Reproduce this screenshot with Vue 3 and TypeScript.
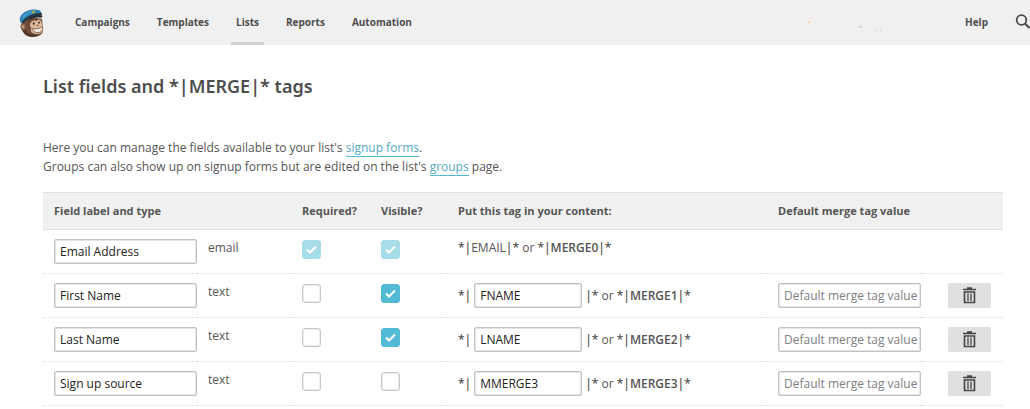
<script setup lang="ts">
import { ref } from 'vue'

interface ListField {
  id: number
  label: string
  type: string
  required: boolean
  visible: boolean
  locked: boolean
  tag: string
  alias: string
  fallback: string
}

const navItems = ['Campaigns', 'Templates', 'Lists', 'Reports', 'Automation']
const current = 'Lists'

const fields = ref<ListField[]>([
  { id: 0, label: 'Email Address', type: 'email', required: true, visible: true, locked: true, tag: 'EMAIL', alias: 'MERGE0', fallback: '' },
  { id: 1, label: 'First Name', type: 'text', required: false, visible: true, locked: false, tag: 'FNAME', alias: 'MERGE1', fallback: '' },
  { id: 2, label: 'Last Name', type: 'text', required: false, visible: true, locked: false, tag: 'LNAME', alias: 'MERGE2', fallback: '' },
  { id: 3, label: 'Sign up source', type: 'text', required: false, visible: false, locked: false, tag: 'MMERGE3', alias: 'MERGE3', fallback: '' },
])

function removeField(id: number) {
  fields.value = fields.value.filter((f) => f.id !== id)
}
</script>

<template>
  <div class="page">
    <header class="topbar">
      <a href="#" class="logo" aria-label="Home">
        <svg width="28" height="30" viewBox="0 0 28 30" aria-hidden="true">
          <path d="M4 14C2 17 3 22 5 24C7 28 13 30 18 28.500C22 28 25 26 25 22L24 11L14 9Z" fill="#6f4c39" />
          <path d="M5 23C8 29 16 30 21 27C16 27 9 27 7 22Z" fill="#4a3025" />
          <ellipse cx="5" cy="18.500" rx="2.500" ry="3" fill="#8f6850" />
          <ellipse cx="5.200" cy="18.600" rx="1.200" ry="1.600" fill="#c39878" />
          <path d="M12.500 15C14 12 17 12 18.500 13C20 11 23.500 11 23.500 15L25 19C26 23 24 26 19 26C14 26 11.500 23 13.500 20C12 19 11.500 17 12.500 15Z" fill="#dcb99a" />
          <path d="M14.500 20.500C18 21.500 22 20.500 24.500 18.500C25.500 22 23 24.800 19.500 24.500C16.500 24.500 14.500 23 14.500 20.500Z" fill="#fffaf0" stroke="#6b4535" stroke-width=".8" />
          <path d="M17 21.500V24M20 21.500V24.500M22.500 20.500V23.500" stroke="#c0a893" stroke-width=".5" />
          <ellipse cx="15.800" cy="15.600" rx=".9" ry="1.300" fill="#3a2920" />
          <ellipse cx="21" cy="14.600" rx=".8" ry="1.200" fill="#3a2920" />
          <path d="M18.500 17.500L20.500 17.200" stroke="#704a38" stroke-width="1" />
          <path d="M2 13C1 9 4 5 9 3C13 1 18 1 22 2.500L24 6C16 6 9 9 5 15C3 15 2 14.500 2 13Z" fill="#2a80b2" />
          <path d="M4 9C8 4 13 2.500 18 2.500C13 5 8 7 5 11Z" fill="#429bca" />
          <path d="M4 14C8 8 16 4.500 23.500 5L24 7.500C17 7.500 9 10.500 5.500 15.500Z" fill="#263843" />
          <path d="M11 11C14 7.500 20 6 24 7.500C25 9 24 10 21 9.500C17 9 14 10 10 13Z" fill="#242b30" />
          <circle cx="15.500" cy="4" r="1.500" fill="#b5ad4c" />
        </svg>
      </a>
      <nav class="nav" aria-label="Main">
        <a v-for="item in navItems" :key="item" href="#" :class="{ active: item === current }">{{ item }}</a>
      </nav>
      <svg class="specks" width="80" height="16" viewBox="0 0 80 16" aria-hidden="true">
        <path d="M3 5h2v1H3z" fill="#fff" />
        <path d="M3 6h2v2H3z" fill="#f5d5ac" />
        <path d="M54 11h3v2h-3z" fill="#d2d2d2" />
        <path d="M70 15h1v1h-1zM75 15h1v1h-1z" fill="#bbb" />
      </svg>
      <a href="#" class="help">Help</a>
      <button type="button" class="search" aria-label="Search">
        <svg width="15" height="18" viewBox="0 0 15 18" aria-hidden="true">
          <circle cx="6.500" cy="6" r="4.800" fill="none" stroke="#4a4a4a" stroke-width="1.800" />
          <path d="M10 9.500L14.500 14" stroke="#4a4a4a" stroke-width="2.200" />
        </svg>
      </button>
    </header>

    <main class="content">
      <h1>List fields and *|MERGE|* tags</h1>
      <p class="intro">
        Here you can manage the fields available to your list's <a href="#">signup forms</a>.<br />
        Groups can also show up on signup forms but are edited on the list's <a href="#">groups</a> page.
      </p>

      <table>
        <colgroup>
          <col class="c-label" /><col class="c-type" /><col class="c-req" /><col class="c-vis" />
          <col /><col class="c-default" /><col class="c-action" />
        </colgroup>
        <thead>
          <tr>
            <th colspan="2" scope="col">Field label and type</th>
            <th scope="col">Required?</th>
            <th scope="col">Visible?</th>
            <th scope="col">Put this tag in your content:</th>
            <th colspan="2" scope="col">Default merge tag value</th>
          </tr>
        </thead>
        <tbody>
          <tr v-for="f in fields" :key="f.id">
            <td><input v-model="f.label" class="text" type="text" aria-label="Field label" /></td>
            <td>{{ f.type }}</td>
            <td><input v-model="f.required" class="check" type="checkbox" :disabled="f.locked" :aria-label="`${f.label} required`" /></td>
            <td><input v-model="f.visible" class="check" type="checkbox" :disabled="f.locked" :aria-label="`${f.label} visible`" /></td>
            <td>
              <div v-if="f.locked"><b>*|</b>{{ f.tag }}<b>|*</b> or <b>*|{{ f.alias }}|*</b></div>
              <div v-else class="tag">
                <b>*|</b>
                <input v-model="f.tag" class="text" type="text" :aria-label="`${f.label} merge tag`" />
                <span><b>|*</b> or <b>*|{{ f.alias }}|*</b></span>
              </div>
            </td>
            <td>
              <input v-if="!f.locked" v-model="f.fallback" class="text" type="text" placeholder="Default merge tag value" :aria-label="`${f.label} default value`" />
            </td>
            <td>
              <button v-if="!f.locked" type="button" class="trash" :aria-label="`Delete ${f.label}`" @click="removeField(f.id)">
                <svg width="13" height="17" viewBox="0 0 13 17" aria-hidden="true">
                  <path d="M0 2.500H13M4 1H9" fill="none" stroke="#444" stroke-width="1.400" />
                  <path d="M1.500 5H11.500V15.500H1.500Z" fill="none" stroke="#444" stroke-width="1.600" />
                  <path d="M5 6.500V14M8 6.500V14" stroke="#444" stroke-width="1.300" />
                </svg>
              </button>
            </td>
          </tr>
        </tbody>
      </table>
    </main>
  </div>
</template>

<style>
body {
  margin: 0;
  background: #fff;
}
</style>

<style scoped>
.page {
  font-family: "Open Sans", "Noto Sans", sans-serif;
  font-size: 12px;
  line-height: 18px;
  color: #555;
  overflow: hidden;
}
.page * {
  box-sizing: border-box;
}
.topbar {
  display: flex;
  align-items: center;
  height: 45px;
  padding-left: 18px;
  background: #f0f0f0;
}
.topbar a {
  color: #4d4d4d;
  font-size: 10px;
  font-weight: 700;
  text-decoration: none;
}
.logo {
  display: flex;
  margin-right: 24px;
}
.nav {
  display: flex;
  gap: 17px;
  flex: 1;
}
.nav a,
.topbar .help {
  height: 45px;
  line-height: 44px;
}
.nav a {
  padding: 0 5px;
}
.nav a.active {
  border-bottom: 3px solid #d0d0d0;
}
.specks {
  margin-right: 80px;
}
.help {
  margin-right: 27px;
}
.search {
  display: flex;
  padding: 0;
  border: 0;
  background: none;
}
.content {
  padding: 29px 27px 0 43px;
}
h1 {
  margin: 0 0 39px;
  font-family: "Noto Sans", "Open Sans", sans-serif;
  font-size: 18px;
  line-height: 25px;
  font-weight: 600;
  color: #4d4d4d;
}
.intro {
  margin: 0 0 16px;
  line-height: 19px;
}
.intro a {
  color: #52a9c3;
  text-decoration: none;
  border-bottom: 1px solid #52bad5;
}
table {
  width: 100%;
  table-layout: fixed;
  border-collapse: separate;
  border-spacing: 0;
}
.c-label { width: 154px; }
.c-type { width: 94px; }
.c-req { width: 79px; }
.c-vis { width: 77px; }
.c-default { width: 154px; }
.c-action { width: 82px; }
th {
  height: 38px;
  padding: 0 0 0 11px;
  background: #f0f0f0;
  border-top: 1px solid #e0e0e0;
  border-bottom: 1px solid #e0e0e0;
  font-size: 11px;
  font-weight: 700;
  text-align: left;
}
td {
  height: 44px;
  padding: 9px 0 0 11px;
  border-bottom: 1px dotted #dcdcdc;
  vertical-align: top;
}
td:last-child {
  padding-left: 27px;
}
.text {
  display: block;
  width: 100%;
  height: 25px;
  padding: 0 0 0 5px;
  border: 1px solid #c2c2c2;
  border-radius: 2px;
  box-shadow: inset 0 0 0 1px #e4e4e4;
  background: #fff;
  color: #222;
  font: inherit;
}
.text::placeholder {
  color: #808080;
  opacity: 1;
}
.check {
  appearance: none;
  display: block;
  width: 19px;
  height: 19px;
  margin: 1px 0 0;
  border: 1px solid #c8c8c8;
  border-radius: 3px;
  box-shadow: inset 0 0 0 1px #ececec;
  background: #fff;
}
.check:checked {
  border-color: #52bad5;
  box-shadow: none;
  background: #52bad5 url("data:image/svg+xml,%3Csvg xmlns='http://www.w3.org/2000/svg' viewBox='0 0 17 17'%3E%3Cpath d='M4 8.500L7 11.500L13 5.500' fill='none' stroke='white' stroke-width='2'/%3E%3C/svg%3E") center / 17px no-repeat;
}
.check:disabled {
  opacity: .5;
}
.tag {
  display: flex;
  align-items: center;
  gap: 3px;
}
.tag .text {
  width: 108px;
}
b {
  font-weight: 600;
}
.trash {
  display: flex;
  align-items: center;
  justify-content: center;
  width: 43px;
  height: 25px;
  padding: 0;
  border: 0;
  border-radius: 2px;
  background: #e0e0e0;
}
</style>
